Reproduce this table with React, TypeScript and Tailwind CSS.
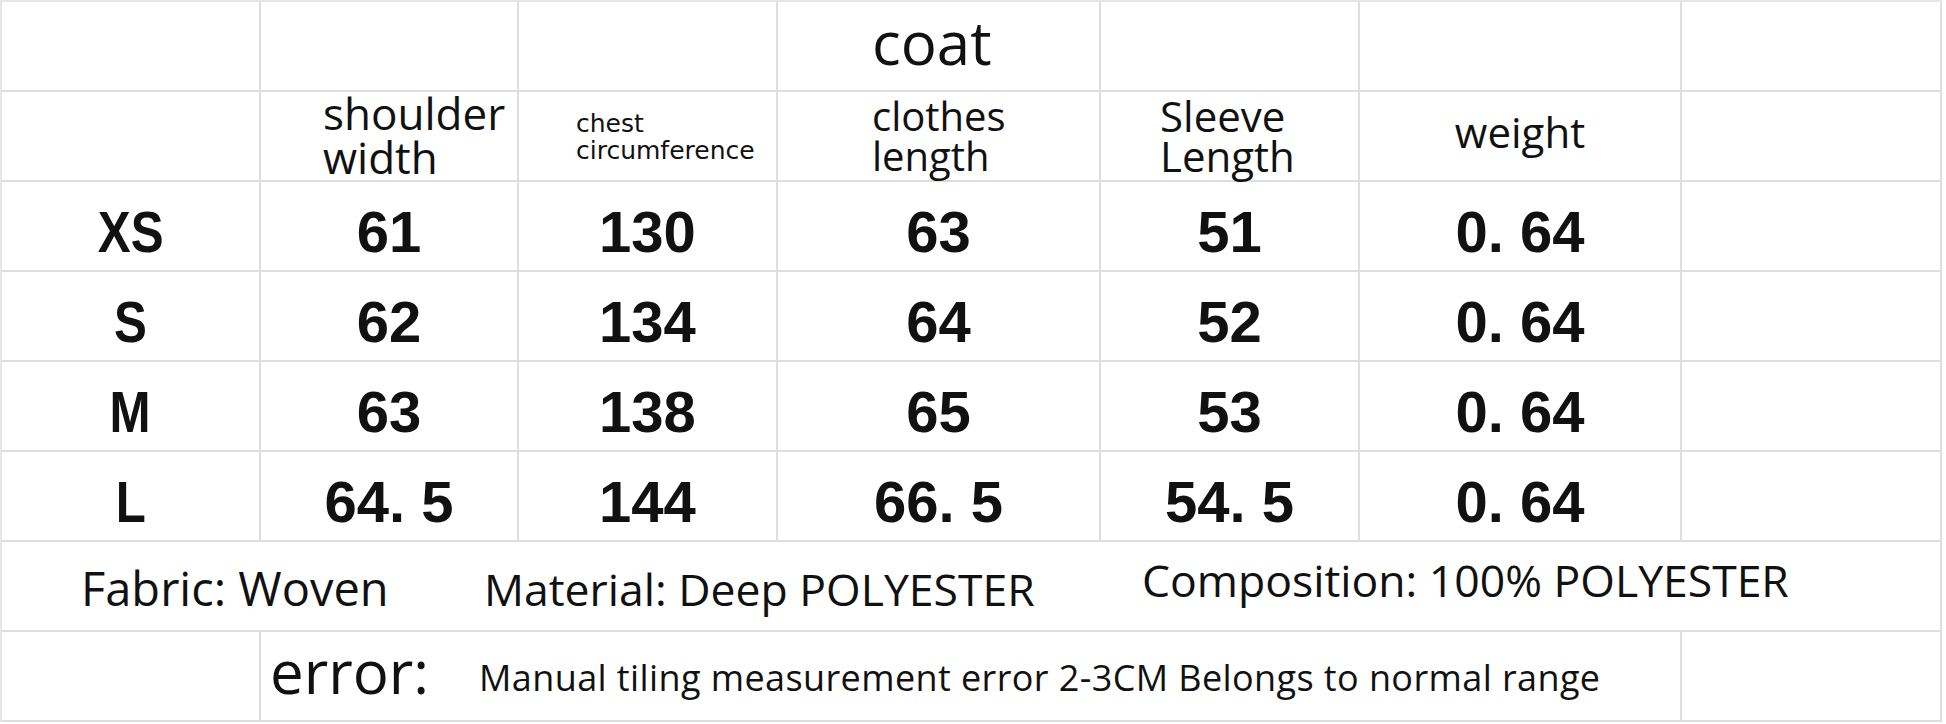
import React from "react";

const sizes = [
  { s: "XS", v: ["61", "130", "63", "51", "0. 64"] },
  { s: "S", v: ["62", "134", "64", "52", "0. 64"] },
  { s: "M", v: ["63", "138", "65", "53", "0. 64"] },
  { s: "L", v: ["64. 5", "144", "66. 5", "54. 5", "0. 64"] },
];

const cell = "border-r-2 border-b-2 border-[#dedede] flex items-center";
const num = "font-['Liberation_Sans',Arial,sans-serif] font-bold text-[58px] leading-none text-[#111] pt-3";
const os = "font-['Open_Sans',sans-serif] text-[#111]";

export default function App() {
  return (
    <div className="w-[1946px] h-[724px] bg-white overflow-hidden">
      <div className="w-[1942px] border-t-2 border-l-2 border-[#e6e6e6] grid grid-cols-[259px_258px_259px_323px_259px_322px_260px] grid-rows-[repeat(8,90px)]">
        {/* row 1 */}
        <div className={cell}></div>
        <div className={cell}></div>
        <div className={cell}></div>
        <div className={`${cell} pl-[94px]`}>
          <span className={`${os} text-[60px] leading-[normal] -mt-[8px]`}>coat</span>
        </div>
        <div className={cell}></div>
        <div className={cell}></div>
        <div className={cell}></div>

        {/* row 2 */}
        <div className={cell}></div>
        <div className={`${cell} pl-[62px]`}>
          <div className={`${os} text-[44px] leading-[44px] -mt-[2px]`}>
            shoulder
            <br />
            width
          </div>
        </div>
        <div className={`${cell} pl-[57px]`}>
          <div className="font-['DejaVu_Sans',sans-serif] text-[25px] leading-[27px] text-[#111] mt-[1px]">
            chest
            <br />
            circumference
          </div>
        </div>
        <div className={`${cell} pl-[94px]`}>
          <div className={`${os} text-[40px] leading-[40px] mt-[0px]`}>
            clothes
            <br />
            length
          </div>
        </div>
        <div className={`${cell} pl-[59px]`}>
          <div className={`${os} text-[42px] leading-[40px] mt-[0px]`}>
            Sleeve
            <br />
            Length
          </div>
        </div>
        <div className={`${cell} justify-center`}>
          <span className={`${os} text-[42px] leading-none -mt-[8px]`}>weight</span>
        </div>
        <div className={cell}></div>

        {/* data rows */}
        {sizes.map((r) => (
          <React.Fragment key={r.s}>
            <div className={`${cell} justify-center`}>
              <span className={`${num} scale-x-[0.85]`}>{r.s}</span>
            </div>
            {r.v.map((v, i) => (
              <div key={i} className={`${cell} justify-center`}>
                <span className={num}>{v}</span>
              </div>
            ))}
            <div className={cell}></div>
          </React.Fragment>
        ))}

        {/* fabric row */}
        <div className={`${cell} col-span-7`}>
          <span className={`${os} text-[47px] leading-none ml-[79px] w-[403px] mt-[4px]`}>Fabric: Woven</span>
          <span className={`${os} text-[44.5px] leading-none w-[658px] mt-[6px]`}>Material: Deep POLYESTER</span>
          <span className={`${os} text-[44.5px] leading-none -mt-[12px]`}>Composition: 100% POLYESTER</span>
        </div>

        {/* error row */}
        <div className={cell}></div>
        <div className={`${cell} col-span-5`}>
          <span className={`${os} text-[60px] leading-none ml-[9px] w-[209px] -mt-[10px]`}>error:</span>
          <span className={`${os} text-[36px] tracking-[0.4px] leading-none mt-[4px]`}>
            Manual tiling measurement error 2-3CM Belongs to normal range
          </span>
        </div>
        <div className={cell}></div>
      </div>
    </div>
  );
}
